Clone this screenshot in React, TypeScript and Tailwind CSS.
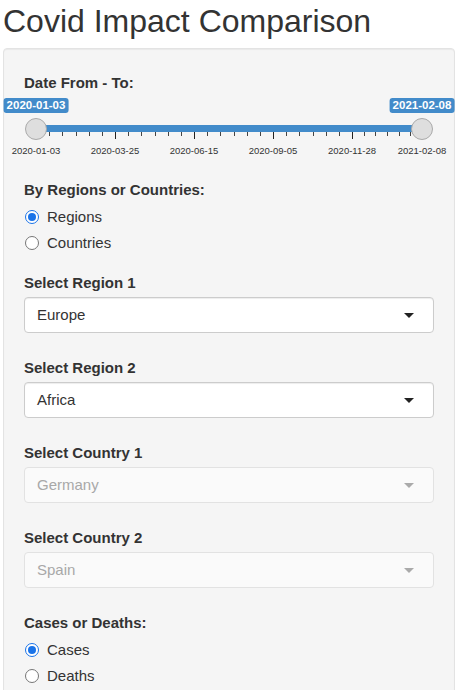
import React from "react";

const majors = [36, 115, 194, 273, 352, 422];
const majorLabels = ["2020-01-03", "2020-03-25", "2020-06-15", "2020-09-05", "2020-11-28", "2021-02-08"];

function buildTicks() {
  const ticks: { x: number; major: boolean }[] = [];
  for (let i = 0; i < majors.length - 1; i++) {
    const a = majors[i];
    const b = majors[i + 1];
    for (let j = 0; j < 6; j++) {
      ticks.push({ x: a + ((b - a) * j) / 6, major: j === 0 });
    }
  }
  ticks.push({ x: majors[majors.length - 1], major: true });
  return ticks;
}

function Label({ children }: { children: React.ReactNode }) {
  return <div className="text-[15px] leading-[20px] font-bold text-[#333]">{children}</div>;
}

function Radio({ checked, label }: { checked: boolean; label: string }) {
  return (
    <div className="h-[26px] flex items-center">
      {checked ? (
        <span className="ml-[1px] w-[14px] h-[14px] rounded-full border-[1.5px] border-[#1a73e8] bg-white flex items-center justify-center">
          <span className="w-[8px] h-[8px] rounded-full bg-[#1a73e8]" />
        </span>
      ) : (
        <span className="ml-[1px] w-[14px] h-[14px] rounded-full border border-[#767676] bg-white" />
      )}
      <span className="ml-[8px] text-[15px] leading-[20px] text-[#333]">{label}</span>
    </div>
  );
}

function Select({ value, disabled }: { value: string; disabled?: boolean }) {
  return (
    <div
      className={
        disabled
          ? "mt-[4px] h-[36px] rounded-[4px] border border-[#e2e2e2] bg-[#fafafa] flex items-center justify-between pl-[12px] pr-[19px]"
          : "mt-[4px] h-[36px] rounded-[4px] border border-[#cccccc] bg-white shadow-[inset_0_1px_1px_rgba(0,0,0,0.075)] flex items-center justify-between pl-[12px] pr-[19px]"
      }
    >
      <span className={disabled ? "text-[15px] text-[#a8a8a8]" : "text-[15px] text-[#333]"}>{value}</span>
      <span
        className={
          disabled
            ? "w-0 h-0 border-l-[5px] border-r-[5px] border-t-[5px] border-l-transparent border-r-transparent border-t-[#aaaaaa]"
            : "w-0 h-0 border-l-[5px] border-r-[5px] border-t-[5px] border-l-transparent border-r-transparent border-t-[#222]"
        }
      />
    </div>
  );
}

function DateSlider() {
  const ticks = buildTicks();
  return (
    <div className="relative h-[87px]">
      <div className="absolute left-[12px] top-[32px] w-[386px] h-[7px] bg-[#428bca]" />
      {ticks.map((t, i) => (
        <div
          key={i}
          className={t.major ? "absolute top-[39px] w-[1px] h-[7px] bg-[#222]" : "absolute top-[39px] w-[1px] h-[4px] bg-[#444]"}
          style={{ left: `${t.x - 24}px` }}
        />
      ))}
      {majors.map((x, i) => (
        <div
          key={i}
          className="absolute top-[52px] -translate-x-1/2 text-[9.5px] leading-[12px] text-[#333] whitespace-nowrap"
          style={{ left: `${x - 24}px` }}
        >
          {majorLabels[i]}
        </div>
      ))}
      <div className="absolute left-[1px] top-[25px] w-[22px] h-[22px] rounded-full bg-[#dedede] border border-[#aaaaaa]" />
      <div className="absolute left-[387px] top-[25px] w-[22px] h-[22px] rounded-full bg-[#dedede] border border-[#aaaaaa]" />
      <div className="absolute left-[12px] top-[5px] -translate-x-1/2 h-[15px] px-[3px] rounded-[3px] bg-[#428bca] text-white font-bold text-[11.5px] leading-[15px] whitespace-nowrap">
        2020-01-03
      </div>
      <div className="absolute left-[398px] top-[5px] -translate-x-1/2 h-[15px] px-[3px] rounded-[3px] bg-[#428bca] text-white font-bold text-[11.5px] leading-[15px] whitespace-nowrap">
        2021-02-08
      </div>
    </div>
  );
}

export default function App() {
  return (
    <div className="w-[458px] h-[690px] overflow-hidden bg-white font-['Liberation_Sans',Arial,sans-serif] px-[3px]">
      <h1 className="pt-[2px] text-[32px] leading-[38px] font-normal text-[#333]">Covid Impact Comparison</h1>
      <div className="mt-[8px] border border-[#e3e3e3] rounded-[4px] bg-[#f5f5f5] shadow-[inset_0_1px_1px_rgba(0,0,0,0.05)] px-[20px] pt-[24px] pb-[40px]">
        <Label>Date From - To:</Label>
        <DateSlider />
        <Label>By Regions or Countries:</Label>
        <div className="mt-[4px]">
          <Radio checked label="Regions" />
          <Radio checked={false} label="Countries" />
        </div>
        <div className="mt-[17px]">
          <Label>Select Region 1</Label>
          <Select value="Europe" />
        </div>
        <div className="mt-[25px]">
          <Label>Select Region 2</Label>
          <Select value="Africa" />
        </div>
        <div className="mt-[25px]">
          <Label>Select Country 1</Label>
          <Select value="Germany" disabled />
        </div>
        <div className="mt-[25px]">
          <Label>Select Country 2</Label>
          <Select value="Spain" disabled />
        </div>
        <div className="mt-[25px]">
          <Label>Cases or Deaths:</Label>
          <div className="mt-[4px]">
            <Radio checked label="Cases" />
            <Radio checked={false} label="Deaths" />
          </div>
        </div>
      </div>
    </div>
  );
}
